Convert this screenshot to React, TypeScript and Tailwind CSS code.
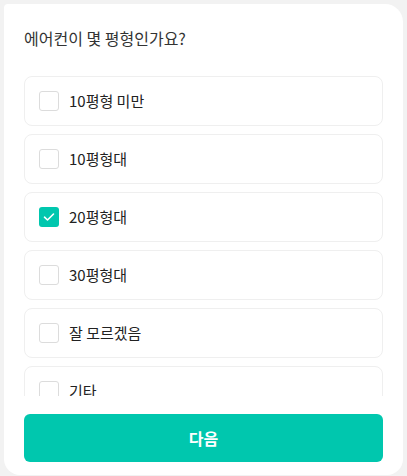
const options = [
  { label: "10평형 미만", checked: false },
  { label: "10평형대", checked: false },
  { label: "20평형대", checked: true },
  { label: "30평형대", checked: false },
  { label: "잘 모르겠음", checked: false },
  { label: "기타", checked: false },
];

function Checkbox({ checked }: { checked: boolean }) {
  if (checked) {
    return (
      <span className="flex h-5 w-5 shrink-0 items-center justify-center rounded-[3px] bg-[#00c7ae]">
        <svg width="12" height="10" viewBox="0 0 12 10" fill="none">
          <path d="M1.5 5.2 4.5 8 10.5 2" stroke="white" strokeWidth="1.6" strokeLinecap="round" strokeLinejoin="round" />
        </svg>
      </span>
    );
  }
  return <span className="h-5 w-5 shrink-0 rounded-[3px] border border-[#dcdcdc] bg-white" />;
}

export default function App() {
  return (
    <div
      className="h-[476px] w-[407px] overflow-hidden bg-[#f2f2f2] p-1"
      style={{ fontFamily: '"Noto Sans CJK KR", "Noto Sans", sans-serif' }}
    >
      <div className="flex h-[471px] flex-col rounded-tl-[4px] rounded-tr-[18px] rounded-b-[16px] bg-white px-5 pt-[22px]">
        <h2 className="text-[16px] leading-6 text-[#333]">에어컨이 몇 평형인가요?</h2>

        {/* list is cut off at the bottom, as in a scrolled panel */}
        <div className="mt-[26px] flex h-[320px] flex-col gap-2 overflow-hidden">
          {options.map((o) => (
            <label
              key={o.label}
              className="flex h-[50px] shrink-0 items-center gap-[10px] rounded-lg border border-[#efefef] bg-white px-[14px]"
            >
              <Checkbox checked={o.checked} />
              <span className="text-[15px] text-[#222]">{o.label}</span>
            </label>
          ))}
        </div>

        <button className="mt-[18px] h-12 w-full rounded-md bg-[#00c7ae] text-[16px] font-bold text-white">
          다음
        </button>
      </div>
    </div>
  );
}
